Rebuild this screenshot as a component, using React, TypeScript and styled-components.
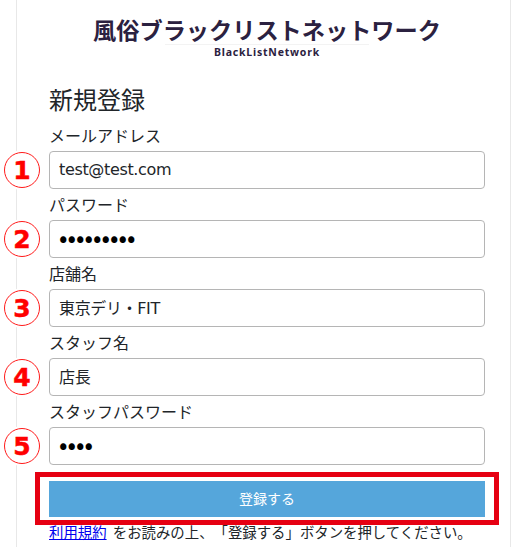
import React from "react";
import styled, { createGlobalStyle } from "styled-components";

const FONT = `"Noto Sans CJK JP", "Noto Sans", sans-serif`;
const INPUT_FONT = `"DejaVu Sans", "Noto Sans CJK JP", sans-serif`;

const GlobalStyle = createGlobalStyle`
  html, body {
    margin: 0;
    padding: 0;
    background: #fff;
    overflow: hidden;
  }
  body {
    font-family: ${FONT};
    color: #212529;
    text-spacing-trim: space-all;
  }
`;

const fields = [
  { label: "メールアドレス", value: "test@test.com", type: "text", num: "1" },
  { label: "パスワード", value: "testtest1", type: "password", num: "2" },
  { label: "店舗名", value: "東京デリ・FIT", type: "text", num: "3" },
  { label: "スタッフ名", value: "店長", type: "text", num: "4" },
  { label: "スタッフパスワード", value: "1234", type: "password", num: "5" },
];

export default function App() {
  return (
    <>
      <GlobalStyle />
      <Card>
        <Logo>
          <LogoTitle>風俗ブラックリストネットワーク</LogoTitle>
          <LogoRule />
          <LogoSub>BlackListNetwork</LogoSub>
        </Logo>
        <Heading>新規登録</Heading>
        <Form>
          {fields.map((f) => (
            <Field key={f.num}>
              <Label>{f.label}</Label>
              <Input type={f.type} defaultValue={f.value} readOnly />
              <Badge>{f.num}</Badge>
            </Field>
          ))}
          <SubmitWrap>
            <Submit type="button">登録する</Submit>
          </SubmitWrap>
          <Terms>
            <a href="#terms">利用規約</a> をお読みの上、「登録する」ボタンを押してください。
          </Terms>
        </Form>
      </Card>
    </>
  );
}

const Card = styled.div`
  box-sizing: border-box;
  width: 495px;
  height: 547px;
  margin-left: 16px;
  padding: 17px 24px 0 32px;
  border-left: 1px solid #e8e8e8;
  border-right: 1px solid #e8e8e8;
`;

const Logo = styled.div`
  display: flex;
  flex-direction: column;
  align-items: center;
  height: 45px;
  margin-left: -1px;
`;

const LogoTitle = styled.div`
  font-size: 23.2px;
  line-height: 24px;
  font-weight: 700;
  color: #2b2140;
  white-space: nowrap;
`;

const LogoRule = styled.div`
  width: 204px;
  height: 1px;
  margin-top: 3px;
  background: #f3f3f3;
  flex-shrink: 0;
`;

const LogoSub = styled.div`
  font-size: 10.5px;
  line-height: 15px;
  font-weight: 700;
  letter-spacing: 0.8px;
  color: #2b2140;
  font-family: "Noto Sans", sans-serif;
`;

const Heading = styled.h1`
  margin: 20px 0 0;
  font-size: 24px;
  line-height: 34px;
  font-weight: 400;
  color: #212529;
`;

const Form = styled.form`
  display: flex;
  flex-direction: column;
  margin-top: 4px;
`;

const Field = styled.div`
  position: relative;
  display: flex;
  flex-direction: column;
`;

const Label = styled.label`
  font-size: 16px;
  line-height: 24px;
  height: 24px;
  margin-top: 3px;
`;

const Input = styled.input`
  box-sizing: border-box;
  width: 436px;
  height: 38px;
  margin-top: 4px;
  padding: 0 9px 2px;
  border: 1px solid #b5b5b5;
  border-radius: 4px;
  outline: none;
  font-family: ${INPUT_FONT};
  font-size: 16px;
  letter-spacing: -0.35px;
  color: #212529;
  background: #fff;

  &[type="password"] {
    padding-bottom: 6px;
    font-family: ${FONT};
    font-size: 25px;
    letter-spacing: 0;
    color: #000;
  }
`;

const Badge = styled.span`
  position: absolute;
  left: -45px;
  top: 32px;
  box-sizing: border-box;
  width: 36px;
  height: 36px;
  border: 1.5px solid #ff1a1a;
  border-radius: 50%;
  background: #fff;
  box-shadow: 0 0 0 2px #fff;
  color: #ff0000;
  font-family: "DejaVu Sans", sans-serif;
  font-size: 25px;
  font-weight: 700;
  -webkit-text-stroke: 0.5px #ff0000;
  display: flex;
  align-items: center;
  justify-content: center;
`;

const SubmitWrap = styled.div`
  position: relative;
  margin-top: 16px;
  width: 436px;

  &::after {
    content: "";
    position: absolute;
    left: -14px;
    right: -14px;
    top: -9px;
    bottom: -8px;
    border: 5px solid #e60012;
    pointer-events: none;
  }
`;

const Submit = styled.button`
  display: block;
  width: 100%;
  height: 36px;
  padding: 0 0 3px;
  border: none;
  background: #55a6db;
  color: #fff;
  font-family: ${FONT};
  font-size: 14px;
`;

const Terms = styled.p`
  margin: 5px 0 0;
  font-size: 14.4px;
  line-height: 20px;
  word-spacing: 3px;
  white-space: nowrap;
  color: #212529;

  a {
    color: #0000ee;
  }
`;
